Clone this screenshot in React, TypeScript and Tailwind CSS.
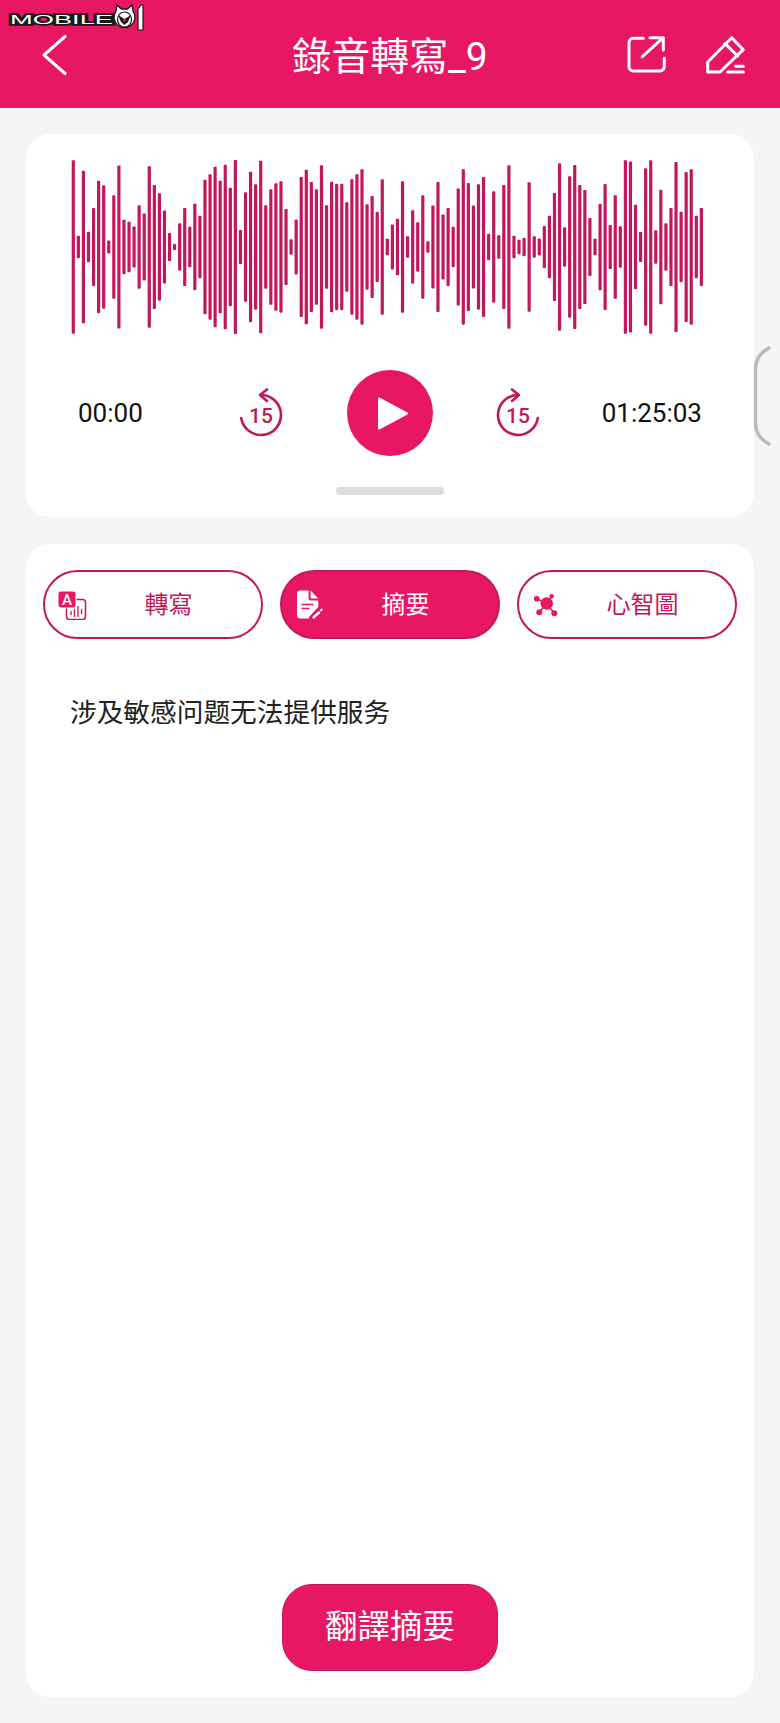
const PINK = "#e81763";
const WINE = "#c2185b";

// bar heights read off the recording, in 1/3 px
const bars = [
  520, 68, 458, 91, 234, 397, 370, 39, 310, 489, 164, 152, 123, 250, 201, 484, 372, 322, 219, 84, 18, 142, 234, 122,
  260, 188, 404, 436, 482, 398, 494, 356, 522, 102, 329, 452, 376, 518, 250, 347, 383, 394, 228, 46, 165, 420, 464,
  390, 347, 490, 250, 391, 379, 379, 268, 406, 436, 466, 256, 306, 210, 406, 50, 135, 170, 395, 65, 220, 148, 310, 35,
  249, 390, 195, 234, 121, 351, 466, 384, 249, 376, 420, 79, 334, 70, 372, 490, 68, 43, 55, 388, 64, 51, 126, 188, 324,
  502, 118, 424, 492, 372, 342, 174, 50, 260, 378, 132, 311, 124, 521, 513, 253, 90, 472, 520, 100, 344, 142, 234, 510,
  212, 450, 466, 188, 234,
];

function Waveform() {
  return (
    <svg viewBox="0 0 728 174" className="block h-[174px] w-full">
      {bars.map((h, i) => (
        <rect key={i} x={47.3 + i * 5.065 - 1.6} y={87 - h / 6} width={3.2} height={h / 3} rx={0.8} fill={WINE} />
      ))}
    </svg>
  );
}

function Logo() {
  return (
    <svg viewBox="0 0 150 36" className="absolute left-0 top-0 h-[36px] w-[150px]">
      <text
        x={10}
        y={23.5}
        textLength={103}
        lengthAdjust="spacingAndGlyphs"
        fontFamily="Liberation Sans"
        fontSize={13}
        fill="#1a1a1a"
        stroke="#1a1a1a"
        strokeWidth={3.4}
      >
        MOBILE
      </text>
      <text
        x={10}
        y={23.5}
        textLength={103}
        lengthAdjust="spacingAndGlyphs"
        fontFamily="Liberation Sans"
        fontSize={13}
        fill="#fff"
      >
        MOBILE
      </text>
      <path d="M117 5l4.5 4h6l4.500-4 1 6a10.500 10.500 0 1 1-17 0z" fill="#fff" stroke="#1a1a1a" strokeWidth={1.4} />
      <ellipse cx={124.500} cy={19.500} rx={7} ry={7.500} fill="#fff" stroke="#1a1a1a" strokeWidth={1.2} />
      <path d="M118 15l6.500 4 6.500-4-3 7-3.500 3-3.500-3z" fill="#1a1a1a" />
      <circle cx={124.500} cy={20} r={1.6} fill={PINK} />
      <path d="M138 9l3-4h2v25h-5z" fill="#fff" stroke="#1a1a1a" strokeWidth={1.2} />
    </svg>
  );
}

function SkipIcon({ forward }: { forward?: boolean }) {
  return (
    <svg viewBox="0 0 46 52" className="h-[52px] w-[46px] shrink-0" fill="none" stroke={WINE} strokeWidth={2.6} strokeLinecap="round" strokeLinejoin="round">
      <g transform={forward ? "translate(46 0) scale(-1 1)" : undefined}>
        <path d="M3.200 31a20 20 0 1 0 19.800-23" />
        <path d="M29 2.500L22 8l7 6" />
      </g>
      <text x={23} y={35.500} textAnchor="middle" fontFamily="Roboto" fontWeight={500} fontSize={21} fill={WINE} stroke="none">
        15
      </text>
    </svg>
  );
}

function TranscribeIcon() {
  return (
    <svg viewBox="0 0 30 30" className="h-[30px] w-[30px] shrink-0" fill="none">
      <rect x={8.500} y={9.500} width={19} height={20} rx={3} stroke={WINE} strokeWidth={1.500} />
      <rect x={0} y={1} width={18} height={17} rx={3} fill={PINK} stroke="#fff" strokeWidth={1} />
      <text x={9} y={15} textAnchor="middle" fontFamily="Roboto" fontWeight={500} fontSize={15} fill="#fff">
        A
      </text>
      <path d="M13 21v4M16.500 19v8M20 16v11M23.500 19v5" stroke={WINE} strokeWidth={1.300} />
    </svg>
  );
}

function SummaryIcon() {
  return (
    <svg viewBox="0 0 30 30" className="h-[30px] w-[30px] shrink-0" fill="none">
      <path d="M5 0.500H13.500V8a2.500 2.500 0 0 0 2.500 2.500H23.300V17L14 27v1.500H5a3 3 0 0 1-3-3V3.500a3 3 0 0 1 3-3z" fill="#fff" />
      <path d="M15.500 0.500l7.800 8H17a1.500 1.500 0 0 1-1.500-1.500z" fill="#fff" />
      <path d="M6.500 14.500h12M6.500 18.500h8" stroke={PINK} strokeWidth={1.600} />
      <path d="M18.500 27.500l5.500-5" stroke="#fff" strokeWidth={2.400} strokeLinecap="round" />
      <path d="M25.800 20.500l1-1" stroke="#fff" strokeWidth={1.800} strokeLinecap="round" />
    </svg>
  );
}

function MindMapIcon() {
  return (
    <svg viewBox="0 0 30 30" className="h-[30px] w-[30px] shrink-0" fill={PINK} stroke="none">
      <path d="M4.700 8.800L14.700 13.500M19.700 6.200L14.700 13.500M22.300 23.200L14.700 13.500M7.300 22.200L14.700 13.500" stroke={PINK} strokeWidth={1.600} />
      <circle cx={14.700} cy={13.500} r={6.200} />
      <circle cx={4.700} cy={8.800} r={2.800} />
      <circle cx={19.700} cy={6.200} r={2.200} />
      <circle cx={22.300} cy={23.200} r={3} />
      <circle cx={7.300} cy={22.200} r={3} />
    </svg>
  );
}

const tabs = [
  { label: "轉寫", icon: <TranscribeIcon />, active: false },
  { label: "摘要", icon: <SummaryIcon />, active: true },
  { label: "心智圖", icon: <MindMapIcon />, active: false },
];

export default function App() {
  return (
    <div className="relative flex min-h-[1723px] flex-col bg-[#f5f5f5] pb-[26px] font-['Roboto','Noto_Sans_CJK_TC',sans-serif]">
      <header className="grid h-[108px] grid-cols-[1fr_auto_1fr] items-center bg-[#e81763] pt-[2px] text-white">
        <svg viewBox="0 0 26 42" className="ml-[41px] h-[42px] w-[26px]" fill="none" stroke="#fff" strokeWidth={3} strokeLinecap="round" strokeLinejoin="round">
          <path d="M24 2.500L3 21l21 18.500" />
        </svg>
        <h1 className="pt-[4px] text-[39px] leading-none">錄音轉寫_9</h1>
        <div className="flex items-center justify-end gap-[39px] pr-[30px]">
          <svg viewBox="0 0 40 40" className="h-[40px] w-[40px]" fill="none" stroke="#fff" strokeWidth={3} strokeLinecap="round" strokeLinejoin="round">
            <path d="M16.300 3.300H6.300a4.300 4.300 0 0 0-4.300 4.300V31.700a4.300 4.300 0 0 0 4.300 4.300H33a4.300 4.300 0 0 0 4.300-4.300V23.300" />
            <path d="M15.300 21.700L36.300 2.700M23 2.700H36.300V15" />
          </svg>
          <svg viewBox="0 0 44 42" className="h-[42px] w-[44px]" fill="none" stroke="#fff" strokeWidth={3} strokeLinecap="round" strokeLinejoin="round">
            <path d="M1.700 28L25.700 3.700L37.300 15.700L14 38H1.700z" />
            <path d="M19 9.700L31.700 22M29.700 32.300H37.300M21.700 38H37.300" />
          </svg>
        </div>
      </header>
      <Logo />

      <section className="mx-[26px] mt-[26px] rounded-[24px] bg-white pb-[22px] pt-[26px]">
        <Waveform />
        <div className="mt-[36px] flex items-center px-[52px] text-[26px] text-[#111]">
          <span className="w-[160px]">00:00</span>
          <SkipIcon />
          <button className="ml-[63px] flex h-[86px] w-[86px] shrink-0 items-center justify-center rounded-full bg-[#e81763]">
            <svg viewBox="0 0 32 34" className="ml-[6px] h-[35px] w-[32px]" fill="#fff" stroke="#fff" strokeWidth={2} strokeLinejoin="round">
              <path d="M2 2L30 17L2 32z" />
            </svg>
          </button>
          <span className="ml-[62px]">
            <SkipIcon forward />
          </span>
          <span className="flex-1 text-right">01:25:03</span>
        </div>
        <div className="mx-auto mt-[31px] h-[8px] w-[108px] rounded-full bg-[#dcdcdc]" />
      </section>

      <section className="mx-[26px] mt-[27px] flex flex-1 flex-col rounded-[24px] bg-white px-[17px] pb-[26px] pt-[26px]">
        <div className="flex gap-[17px]">
          {tabs.map((tab) => (
            <button
              key={tab.label}
              className={`flex h-[69px] flex-1 items-center rounded-full border-2 border-[#c2185b] pl-[13px] pr-[12px] text-[24px] ${
                tab.active ? "bg-[#e81763] text-white" : "bg-white text-[#c2185b]"
              }`}
            >
              {tab.icon}
              <span className="flex-1 text-center">{tab.label}</span>
            </button>
          ))}
        </div>
        <p className="ml-[27px] mt-[53px] font-['Noto_Sans_CJK_SC',sans-serif] text-[26.7px] leading-[38px] text-[#222]">
          涉及敏感问题无法提供服务
        </p>
        <button className="mx-auto mt-auto flex h-[87px] w-[216px] items-center justify-center rounded-[30px] border border-[#c2185b] bg-[#e81763] text-[32.5px] text-white">
          翻譯摘要
        </button>
      </section>

      <svg viewBox="0 0 18 100" className="absolute left-[753px] top-[346px] h-[100px] w-[18px]" fill="none" stroke="#bbb" strokeWidth={3.500} strokeLinecap="round">
        <path d="M16 2C7 7 2.500 13 2.500 24V76C2.500 87 7 93 16 98" />
      </svg>
    </div>
  );
}
